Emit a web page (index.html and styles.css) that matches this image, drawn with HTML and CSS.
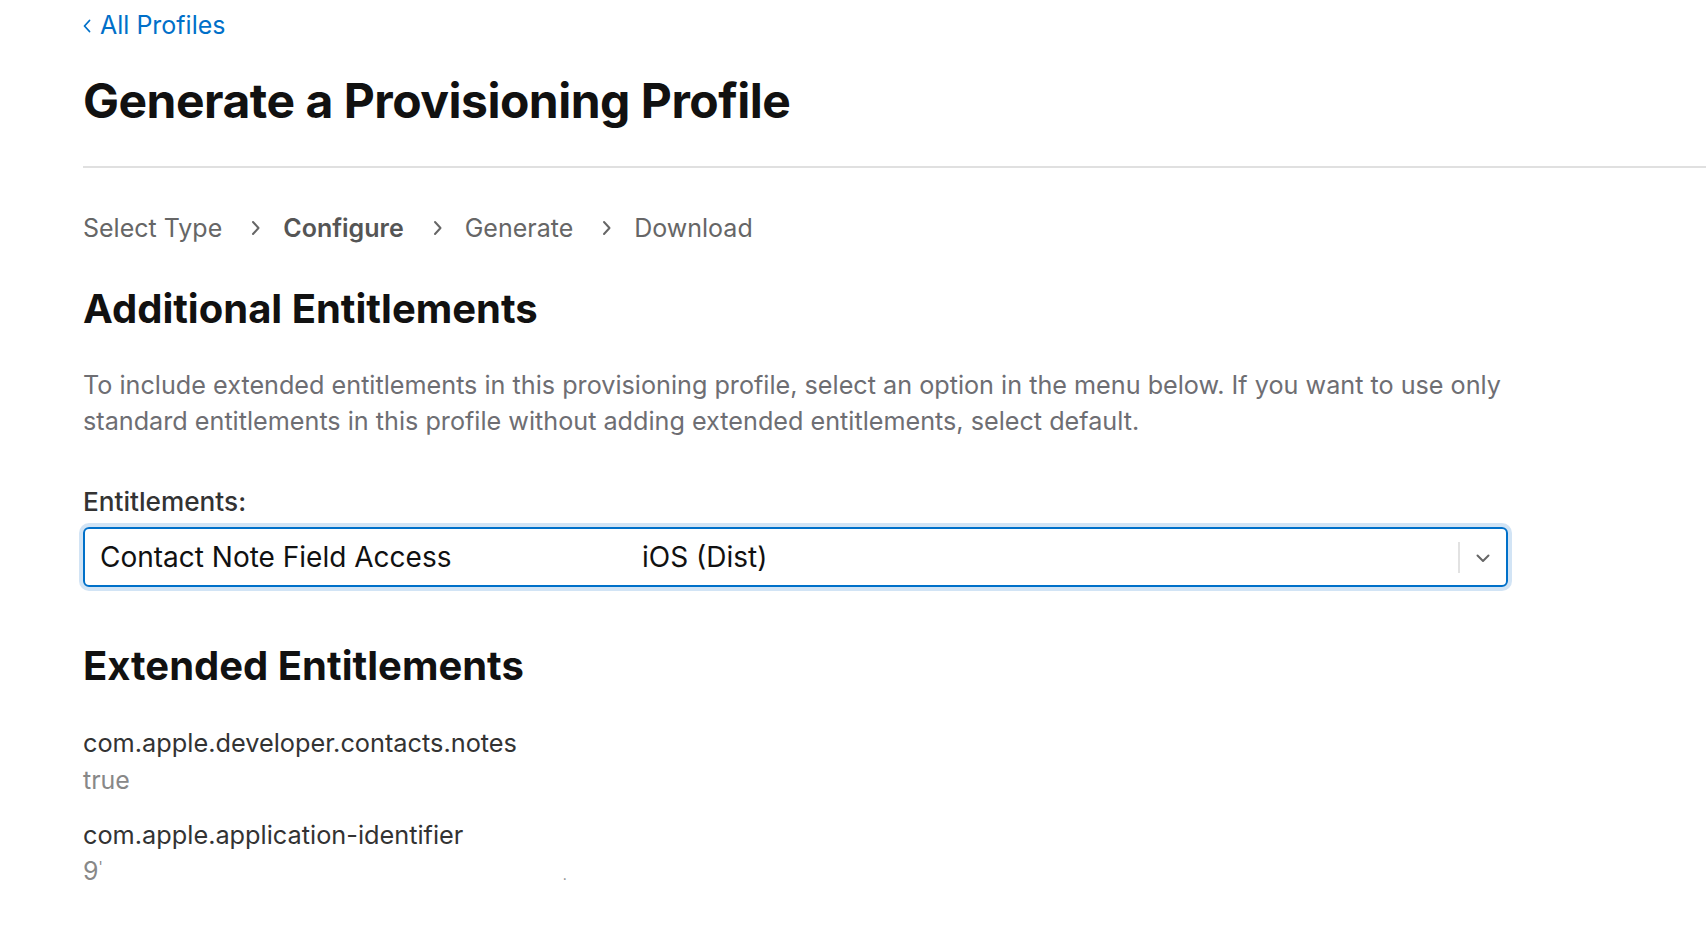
FILE: index.html
```html
<!DOCTYPE html>
<html>
<head>
  <link rel="stylesheet" href="styles.css">
</head>
<body>
  <div class="page">
    <a href="#" class="back">
      <svg class="back-chevron" width="8" height="14" viewBox="0 0 8 14"><path d="M6.5 1.5 L1.5 7 L6.5 12.5" fill="none" stroke="currentColor" stroke-width="1.8" stroke-linecap="round" stroke-linejoin="round"/></svg>
      All Profiles
    </a>
    <h1 class="title">Generate a Provisioning Profile</h1>
    <div class="rule"></div>
    <div class="steps">
      <span class="step">Select Type</span>
      <svg class="step-sep" width="11" height="16" viewBox="0 0 11 16"><path d="M3 2 L8.5 8 L3 14" fill="none" stroke="currentColor" stroke-width="2" stroke-linecap="round" stroke-linejoin="round"/></svg>
      <span class="step current">Configure</span>
      <svg class="step-sep" width="11" height="16" viewBox="0 0 11 16"><path d="M3 2 L8.5 8 L3 14" fill="none" stroke="currentColor" stroke-width="2" stroke-linecap="round" stroke-linejoin="round"/></svg>
      <span class="step">Generate</span>
      <svg class="step-sep" width="11" height="16" viewBox="0 0 11 16"><path d="M3 2 L8.5 8 L3 14" fill="none" stroke="currentColor" stroke-width="2" stroke-linecap="round" stroke-linejoin="round"/></svg>
      <span class="step">Download</span>
    </div>

    <h2 class="section-title">Additional Entitlements</h2>
    <p class="intro">To include extended entitlements in this provisioning profile, select an option in the menu below. If you want to use only standard entitlements in this profile without adding extended entitlements, select default.</p>

    <div class="field-label">Entitlements:</div>
    <div class="select">
      <span class="select-name">Contact Note Field Access</span>
      <span class="select-platform">iOS (Dist)</span>
      <span class="select-divider"></span>
      <svg class="select-chevron" width="14" height="9" viewBox="0 0 14 9"><path d="M1.5 1.5 L7 7 L12.5 1.5" fill="none" stroke="currentColor" stroke-width="2" stroke-linecap="round" stroke-linejoin="round"/></svg>
    </div>

    <h2 class="section-title extended">Extended Entitlements</h2>
    <div class="ent-list">
      <div class="ent-item">
        <div class="ent-key">com.apple.developer.contacts.notes</div>
        <div class="ent-value">true</div>
      </div>
      <div class="ent-item">
        <div class="ent-key">com.apple.application-identifier</div>
        <div class="ent-value short">9<span class="redacted">'</span><span class="redacted-dot">.</span></div>
      </div>
    </div>
  </div>
</body>
</html>
```

FILE: styles.css
```css
body {
  margin: 0;
  font-family: Inter, "Noto Sans", sans-serif;
  background: #fff;
  color: #1d1d1f;
  overflow: hidden;
}
.page {
  padding-left: 83px;
  padding-top: 10px;
}
.back {
  display: inline-flex;
  align-items: center;
  gap: 9px;
  color: #0070c9;
  text-decoration: none;
  font-size: 25px;
  line-height: 30px;
}
.back-chevron {
  margin-top: 2px;
}
.title {
  margin: 31px 0 0;
  font-size: 48px;
  line-height: 60px;
  font-weight: 700;
  color: #111;
  letter-spacing: -0.5px;
}
.rule {
  height: 2px;
  background: #e0e0e0;
  margin-top: 35px;
}
.steps {
  display: flex;
  align-items: center;
  margin-top: 45px;
  font-size: 25px;
  line-height: 30px;
  color: #666;
}
.step-sep {
  margin: 0 22px 0 28px;
  color: #666;
}
.step.current {
  font-weight: 600;
  color: #555;
}
.section-title {
  margin: 44px 0 0;
  font-size: 40px;
  line-height: 44px;
  font-weight: 700;
  color: #111;
}
.intro {
  margin: 36px 0 0;
  max-width: 1430px;
  font-size: 25.2px;
  line-height: 36px;
  color: #6e6e73;
}
.field-label {
  margin-top: 48px;
  font-size: 26.2px;
  line-height: 30px;
  font-weight: 500;
  color: #333;
}
.select {
  margin-top: 10px;
  width: 1425px;
  height: 60px;
  box-sizing: border-box;
  border: 2px solid #0070c9;
  border-radius: 6px;
  box-shadow: 0 0 0 4px #d2e4f5;
  display: flex;
  align-items: center;
  padding-left: 15px;
  font-size: 28px;
  color: #111;
}
.select-name {
  width: 542px;
}
.select-platform {
  flex-grow: 1;
}
.select-divider {
  width: 2px;
  height: 31px;
  background: #e2e2e2;
}
.select-chevron {
  margin: 2px 16px 0 16px;
  color: #666;
}
.section-title.extended {
  margin-top: 57px;
}
.ent-list {
  margin-top: 37px;
}
.ent-item + .ent-item {
  margin-top: 17px;
}
.ent-key {
  font-size: 25.3px;
  line-height: 36px;
  color: #333;
}
.ent-value {
  font-size: 25px;
  line-height: 39px;
  color: #888;
}
.ent-value.short {
  line-height: 28px;
}
.redacted {
  font-size: 14px;
  vertical-align: 8px;
}
.redacted-dot {
  margin-left: 460px;
  font-size: 14px;
}
```
